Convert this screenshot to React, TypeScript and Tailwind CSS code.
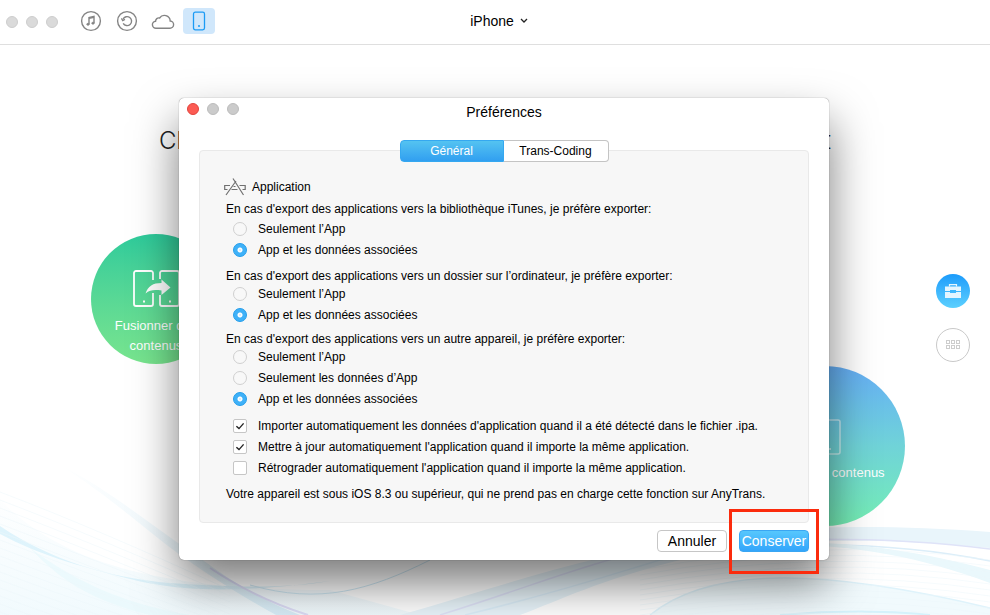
import { ReactNode, useState } from 'react';

interface ChoiceGroup {
    name: string;
    legend: string;
    options: string[];
    selected: number;
    spacing: string;
}

const groups: ChoiceGroup[] = [
    {
        name: 'itunes',
        legend: "En cas d'export des applications vers la bibliothèque iTunes, je préfère exporter:",
        options: ['Seulement l’App', 'App et les données associées'],
        selected: 1,
        spacing: 'mt-[5px] space-y-0 [&>legend]:mb-0.5',
    },
    {
        name: 'folder',
        legend: "En cas d'export des applications vers un dossier sur l’ordinateur, je préfère exporter:",
        options: ['Seulement l’App', 'App et les données associées'],
        selected: 1,
        spacing: 'mt-[9px]',
    },
    {
        name: 'device',
        legend: "En cas d'export des applications vers un autre appareil, je préfère exporter:",
        options: ['Seulement l’App', 'Seulement les données d’App', 'App et les données associées'],
        selected: 2,
        spacing: 'mt-[7px]',
    },
];

const checks = [
    { label: "Importer automatiquement les données d'application quand il a été détecté dans le fichier .ipa.", on: true },
    { label: "Mettre à jour automatiquement l'application quand il importe la même application.", on: true },
    { label: "Rétrograder automatiquement l'application quand il importe la même application.", on: false },
];

function Waves() {
    return (
        <svg className="absolute inset-0 h-full w-full" viewBox="0 0 990 615" preserveAspectRatio="xMidYMax slice" aria-hidden="true">
            <defs>
                <linearGradient id="haze" x1="0" y1="0" x2="0" y2="1">
                    <stop offset="0" stopColor="#eef9fd" stopOpacity="0.1" />
                    <stop offset="1" stopColor="#eef9fd" stopOpacity="0.8" />
                </linearGradient>
                <linearGradient id="ribbon" x1="0" y1="0" x2="1" y2="0">
                    <stop offset="0" stopColor="#e0f3fb" stopOpacity="0" />
                    <stop offset="1" stopColor="#d6ecf7" />
                </linearGradient>
                <linearGradient id="streak" x1="0" y1="0" x2="1" y2="0">
                    <stop offset="0" stopColor="#dff4fc" />
                    <stop offset="1" stopColor="#d9eff8" />
                </linearGradient>
            </defs>
            <path d="M0 500 C60 560 150 590 330 590 L420 615 H0Z" fill="url(#haze)" />
            <path d="M0 526 C50 560 110 578 170 583 C240 588 290 588 330 581 C240 593 180 592 130 579 C75 565 40 555 0 534Z" fill="url(#streak)" />
            <path d="M30 548 C80 585 130 605 190 615 L150 615 C90 600 60 580 30 548Z" fill="#e6f9fc" opacity="0.6" />
            <path d="M60 465 C110 490 150 525 200 558 C230 580 260 600 300 615 L276 615 C240 595 210 576 180 555 C140 525 110 497 60 465Z" fill="url(#ribbon)" />
            <path d="M210 568 C240 588 270 603 308 615" fill="none" stroke="#dcdcf6" strokeWidth="2" />
            <path d="M250 585 C320 605 370 590 430 560" fill="none" stroke="#cfe8f4" strokeWidth="1" />
            <path d="M400 615 C480 592 540 572 600 558 C700 530 830 520 990 532 V548 C850 535 780 540 680 560 C600 580 560 600 520 615Z" fill="#e9f5fb" />
            <path d="M440 615 C520 590 570 570 620 557 C720 535 880 535 990 549" fill="none" stroke="#dfe3f8" strokeWidth="1.5" />
            <path d="M465 615 C560 592 610 575 660 560 C760 538 890 541 990 561" fill="none" stroke="#dceef9" strokeWidth="1.5" />
            <path d="M700 548 C820 538 900 550 990 583 V570 C900 546 820 536 700 546Z" fill="#eaf8fc" />
            <path d="M650 615 C700 575 790 560 990 608 V615Z" fill="#f1fafd" />
            <path d="M650 615 C700 575 790 560 990 608" fill="none" stroke="#dff3fb" strokeWidth="1.5" />
            <path d="M780 615 C840 610 900 611 930 615" fill="none" stroke="#d5f2fb" strokeWidth="2" />
            <g fill="none" stroke="#edf6fa" strokeWidth="0.5">
                {Array.from({ length: 16 }, (_, i) => (
                    <path key={i} d={`M0 ${492 + i * 8} Q100 ${530 + i * 8} 230 ${590 + i * 6}`} />
                ))}
                {Array.from({ length: 14 }, (_, i) => (
                    <path key={i} d={`M640 ${570 + i * 5} Q820 ${535 + i * 6} 990 ${560 + i * 6}`} />
                ))}
            </g>
        </svg>
    );
}

function ToolButton({ label, active, children }: { label: string; active?: boolean; children: ReactNode }) {
    return (
        <button
            aria-label={label}
            className={`flex h-[26px] w-8 items-center justify-center rounded-[4px] ${active ? 'bg-[#d0e7fb] text-[#1b9bf5]' : 'text-[#848484]'}`}
        >
            {children}
        </button>
    );
}

function Toolbar() {
    return (
        <header className="relative flex h-[45px] shrink-0 items-start border-b border-[#dfdfdf] bg-white pt-2">
            <div className="flex h-7 items-center gap-2 pl-1.5">
                {[0, 1, 2].map((i) => (
                    <span key={i} className="h-3 w-3 rounded-full border border-[#cdcdcd] bg-[#dadada]" />
                ))}
            </div>
            <nav className="ml-[17px] flex gap-1">
                <ToolButton label="Musique">
                    <svg width="22" height="22" viewBox="0 0 22 22" fill="none" stroke="currentColor" strokeWidth="1.4">
                        <circle cx="11" cy="11" r="9.4" />
                        <path d="M9 14.2V7.6L14 6.4V13" />
                        <path d="M9 8.4L14 7.2" />
                        <ellipse cx="8" cy="14.3" rx="1.3" ry="1" fill="currentColor" strokeWidth="0.7" />
                        <ellipse cx="13" cy="13.2" rx="1.3" ry="1" fill="currentColor" strokeWidth="0.7" />
                    </svg>
                </ToolButton>
                <ToolButton label="Sauvegardes">
                    <svg width="22" height="22" viewBox="0 0 22 22" fill="none" stroke="currentColor" strokeWidth="1.4">
                        <circle cx="11" cy="11" r="9.4" />
                        <path d="M7 9.2A4.5 4.5 0 1 1 7.2 13.4" />
                        <path d="M5.4 8.4L6.7 10.6L9 9.4" strokeWidth="1.2" />
                    </svg>
                </ToolButton>
                <ToolButton label="iCloud">
                    <svg width="24" height="18" viewBox="0 0 24 18" fill="none" stroke="currentColor" strokeWidth="1.4">
                        <path d="M5.2 16.2H18.8A3.6 3.6 0 0 0 19.2 9A5.8 5.8 0 0 0 8.6 6A3.2 3.2 0 0 0 4.6 9.2A3.5 3.5 0 0 0 5.2 16.2Z" />
                    </svg>
                </ToolButton>
                <ToolButton label="Appareil" active>
                    <svg width="14" height="20" viewBox="0 0 14 20" fill="none" stroke="currentColor" strokeWidth="1.3">
                        <rect x="1.5" y="1.2" width="11" height="17.6" rx="1.8" />
                        <circle cx="7" cy="15" r="1" fill="currentColor" stroke="none" />
                    </svg>
                </ToolButton>
            </nav>
            <div className="pointer-events-none absolute inset-x-0 top-0 flex h-[42px] justify-center pl-2">
                <button className="pointer-events-auto flex items-center gap-1.5 text-sm text-black">
                    iPhone
                    <svg width="8" height="6" viewBox="0 0 8 6" fill="none" stroke="#222" strokeWidth="1.3">
                        <path d="M1 1L4 4L7 1" />
                    </svg>
                </button>
            </div>
        </header>
    );
}

function Home() {
    return (
        <main className="relative flex-1">
            <h1 className="mx-auto flex w-[672px] justify-between pt-20 font-[Inter,sans-serif] text-2xl leading-8 font-light text-[#222]">
                <span>Ch</span>
                <span>t</span>
            </h1>

            <button className="absolute top-[189px] left-[91px] flex h-[130px] w-[130px] flex-col items-center rounded-full bg-linear-to-b from-[#2dcb9b] to-[#78e58e] pt-9 text-[13px] leading-5 text-white">
                <svg className="mb-2 ml-0.5 shrink-0" width="48" height="38" viewBox="0 0 48 38" fill="none" stroke="white" strokeWidth="1.8">
                    <path d="M20 10V3A2 2 0 0 0 18 1H3A2 2 0 0 0 1 3V34A2 2 0 0 0 3 36H18A2 2 0 0 0 20 34V23" />
                    <path d="M27 9V3A2 2 0 0 1 29 1H44A2 2 0 0 1 46 3V34A2 2 0 0 1 44 36H29A2 2 0 0 1 27 34V25" />
                    <path d="M12.5 23.5C15 16 20 13 28.5 13V9.5L37.5 17.5L28.5 25V20.5C21 19.5 17 20 12.5 23.5Z" fill="white" stroke="none" />
                    <path d="M10 31.5H12M36 31.5H38" strokeWidth="2" />
                </svg>
                Fusionner des
                <br />
                contenus
            </button>

            <button className="absolute top-[321px] left-[745px] flex h-40 w-40 flex-col items-center rounded-full bg-linear-to-b from-[#66aef5] via-[#70d3d8] to-[#75eeb4] pt-[53px] text-[13px] leading-5 text-white">
                <svg className="mb-2 shrink-0" width="34" height="36" viewBox="0 0 34 36" fill="none" stroke="white" strokeOpacity="0.55" strokeWidth="1.6">
                    <rect x="12" y="1" width="20" height="34" rx="2" />
                    <path d="M21 30H23" strokeWidth="2" />
                </svg>
                Gestion de contenus
            </button>

            <nav className="absolute top-[229px] right-5 flex flex-col gap-5">
                <button aria-label="Outils" className="flex h-[34px] w-[34px] items-center justify-center rounded-full bg-linear-to-b from-[#1a9bfb] to-[#5bd0fe]">
                    <svg width="16" height="14" viewBox="0 0 16 14">
                        <path d="M4.5 2.5V0.6H11.5V2.5" fill="none" stroke="#e4f5ff" strokeWidth="1.2" />
                        <path d="M0 2.5H16V7H11V6H5V7H0ZM0 8H5V9H11V8H16V14H0Z" fill="#e4f5ff" />
                    </svg>
                </button>
                <button aria-label="Catégories" className="flex h-[34px] w-[34px] items-center justify-center rounded-full border border-[#c9c9c9] bg-white">
                    <svg width="14" height="10" viewBox="0 0 14 10" fill="none" stroke="#cdcdcd">
                        {[0.5, 5.5, 10.5].map((x) => (
                            <g key={x}>
                                <rect x={x} y="0.5" width="3" height="3" />
                                <rect x={x} y="5.5" width="3" height="3" />
                            </g>
                        ))}
                    </svg>
                </button>
            </nav>
        </main>
    );
}

function RadioGroup({ group }: { group: ChoiceGroup }) {
    return (
        <fieldset className={group.spacing}>
            <legend className="h-3.5 leading-[14px]">{group.legend}</legend>
            {group.options.map((option, i) => (
                <label key={option} className="flex h-[21px] items-center gap-[11px] pl-[7px]">
                    <input
                        type="radio"
                        name={group.name}
                        defaultChecked={i === group.selected}
                        className="h-3.5 w-3.5 shrink-0 appearance-none rounded-full border border-[#d0d0d0] bg-[#f8f8f8] checked:border-[#1f9ceb] checked:bg-[radial-gradient(circle,#7ccbfa_0px,#fff_1px,#fff_2px,#3fb1f8_3px)]"
                    />
                    {option}
                </label>
            ))}
        </fieldset>
    );
}

function Preferences() {
    const [tab, setTab] = useState(0);

    return (
        <div
            role="dialog"
            aria-labelledby="prefs-title"
            className="w-[650px] rounded-[5px] bg-white text-black shadow-[0_0_1px_rgba(0,0,0,0.6),0_24px_46px_rgba(0,0,0,0.52)]"
        >
            <div className="relative flex h-[42px] items-start pt-[5px] pl-2">
                <div className="flex gap-2">
                    <button aria-label="Fermer" className="h-3 w-3 rounded-full border border-[#e2443d] bg-[#fc5b53]" />
                    <span className="h-3 w-3 rounded-full border border-[#bcbcbc] bg-[#cbcbcb]" />
                    <span className="h-3 w-3 rounded-full border border-[#bcbcbc] bg-[#cbcbcb]" />
                </div>
                <h2 id="prefs-title" className="absolute inset-x-0 top-1 text-center text-sm leading-5">
                    Préférences
                </h2>
            </div>

            <div role="tablist" className="relative flex justify-center text-xs">
                {['Général', 'Trans-Coding'].map((name, i) => (
                    <button
                        key={name}
                        role="tab"
                        aria-selected={tab === i}
                        onClick={() => setTab(i)}
                        className={`h-[22px] border ${i === 0 ? 'w-[104px] rounded-l-[4px]' : 'w-[105px] rounded-r-[4px]'} ${
                            tab === i
                                ? 'border-[#35a8f0] bg-linear-to-b from-[#54c3f1] to-[#319ff0] font-medium text-white'
                                : 'border-l-0 border-[#c4c4c4] bg-white'
                        }`}
                    >
                        {name}
                    </button>
                ))}
            </div>

            <div className="mx-5 -mt-3 rounded-[4px] border border-[#e9e9e9] bg-[#f7f7f7] pt-[26px] pr-4 pb-5 pl-[26px] text-xs">
                <h3 className="-ml-0.5 flex h-5 items-center gap-1.5">
                    <svg width="22" height="18" viewBox="0 0 22 18" fill="none" stroke="#707070" strokeWidth="1.2">
                        <path d="M9 0.5L19.5 17M12 3L2 17" />
                        <path d="M6 7.5H0.7V11.5H3.5M7.5 11.5H13.5M9.5 8.5H11.5M15.5 7.5H21.2V11.5H18.5" />
                    </svg>
                    Application
                </h3>

                {groups.map((group) => (
                    <RadioGroup key={group.name} group={group} />
                ))}

                <div className="mt-1.5">
                    {checks.map((check) => (
                        <label key={check.label} className="flex h-[21px] items-center gap-[11px] pl-[7px]">
                            <span className="relative flex">
                                <input
                                    type="checkbox"
                                    defaultChecked={check.on}
                                    className="peer h-3.5 w-3.5 appearance-none rounded-[2px] border border-[#c6c6c6] bg-white"
                                />
                                <svg
                                    className="pointer-events-none absolute inset-0 hidden peer-checked:block"
                                    width="14"
                                    height="14"
                                    viewBox="0 0 14 14"
                                    fill="none"
                                    stroke="#222"
                                    strokeWidth="1.4"
                                >
                                    <path d="M3.4 7.2L6 9.6L10.6 4.4" />
                                </svg>
                            </span>
                            {check.label}
                        </label>
                    ))}
                </div>

                <p className="mt-2 leading-4">
                    Votre appareil est sous iOS 8.3 ou supérieur, qui ne prend pas en charge cette fonction sur AnyTrans.
                </p>
            </div>

            <div className="flex justify-end gap-3 px-5 pt-[7px] pb-2 text-sm">
                <button className="h-[22px] w-[70px] rounded-[4px] border border-[#c6c6c6] bg-white leading-5">Annuler</button>
                <div className="relative">
                    <button className="h-[22px] w-[70px] rounded-[4px] border border-[#3aa6f2] bg-linear-to-b from-[#56c7fd] to-[#33a5fb] leading-5 font-medium text-white">
                        Conserver
                    </button>
                    <span className="pointer-events-none absolute -inset-x-2.5 -top-[21px] -bottom-[22px] border-3 border-[#fb2b0d]" />
                </div>
            </div>
        </div>
    );
}

export default function App() {
    return (
        <div className="relative flex min-h-screen flex-col overflow-hidden bg-white font-['Liberation_Sans',Arial,sans-serif]">
            <Waves />
            <Toolbar />
            <Home />
            <div className="absolute inset-0 flex items-start justify-center pt-[98px] pl-[18px]">
                <Preferences />
            </div>
        </div>
    );
}
